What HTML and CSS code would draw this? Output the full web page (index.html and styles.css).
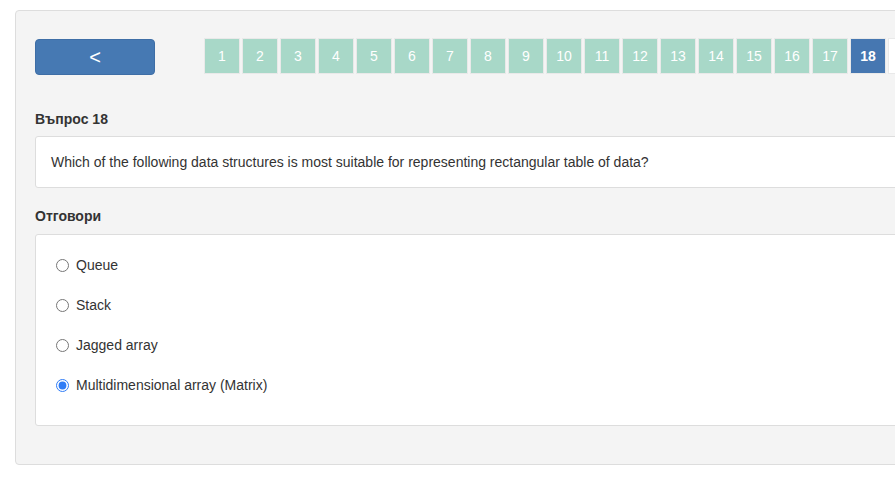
FILE: index.html
```html
<!DOCTYPE html>
<html>
<head>
<meta charset="utf-8">
<link rel="stylesheet" href="styles.css">
</head>
<body>
<div class="panel">
  <div class="topbar">
    <button class="back">&lt;</button>
    <div class="pages">
      <span class="pg done">1</span><span class="pg done">2</span><span class="pg done">3</span><span class="pg done">4</span><span class="pg done">5</span><span class="pg done">6</span><span class="pg done">7</span><span class="pg done">8</span><span class="pg done">9</span><span class="pg done">10</span><span class="pg done">11</span><span class="pg done">12</span><span class="pg done">13</span><span class="pg done">14</span><span class="pg done">15</span><span class="pg done">16</span><span class="pg done">17</span><span class="pg current">18</span><span class="pg"></span>
    </div>
  </div>
  <div class="label">Въпрос 18</div>
  <div class="qbox">Which of the following data structures is most suitable for representing rectangular table of data?</div>
  <div class="label second">Отговори</div>
  <div class="abox">
    <label class="opt"><input type="radio" name="a"> <span>Queue</span></label>
    <label class="opt"><input type="radio" name="a"> <span>Stack</span></label>
    <label class="opt"><input type="radio" name="a"> <span>Jagged array</span></label>
    <label class="opt"><input type="radio" name="a" checked> <span>Multidimensional array (Matrix)</span></label>
  </div>
</div>
</body>
</html>
```

FILE: styles.css
```css
html, body {
  margin: 0;
  padding: 0;
  overflow: hidden;
  background: #ffffff;
}
body {
  font-family: "Liberation Sans", Arial, sans-serif;
  font-size: 14px;
  color: #333333;
  width: 895px;
  height: 503px;
}
.panel {
  margin: 10px 0 0 15px;
  width: 1000px;
  background: #f4f4f4;
  border: 1px solid #dddddd;
  border-radius: 4px;
  padding: 28px 19px 38px 19px;
  box-sizing: content-box;
}
.topbar {
  display: flex;
  align-items: flex-start;
  height: 36px;
}
.back {
  width: 120px;
  height: 36px;
  background: #4679b3;
  border: 1px solid #3e6ea6;
  border-radius: 4px;
  color: #ffffff;
  font-family: "Liberation Sans", Arial, sans-serif;
  font-size: 20px;
  line-height: 20px;
  padding: 0;
  margin: 0;
}
.pages {
  display: flex;
  gap: 2px;
  margin-left: 49px;
  margin-top: -1px;
  white-space: nowrap;
}
.pg {
  box-sizing: border-box;
  width: 36px;
  height: 36px;
  border: 1px solid #e9e9e9;
  background: #ffffff;
  color: #ffffff;
  display: flex;
  align-items: center;
  justify-content: center;
  font-size: 14px;
  flex: none;
}
.pg.done {
  background: #a8d8c8;
}
.pg.current {
  background: #4677b1;
  font-weight: bold;
}
.label {
  font-weight: bold;
  line-height: 20px;
  margin-top: 34px;
  margin-bottom: 7px;
}
.label.second {
  margin-top: 18px;
  margin-bottom: 8px;
}
.qbox {
  background: #ffffff;
  border: 1px solid #dddddd;
  border-radius: 3px;
  padding: 16px 15px 15px 15px;
  line-height: 19px;
}
.abox {
  background: #ffffff;
  border: 1px solid #dddddd;
  border-radius: 3px;
  padding: 10px 20px 20px 20px;
  display: flex;
  flex-direction: column;
}
.opt {
  display: flex;
  align-items: center;
  height: 40px;
  line-height: 20px;
}
.opt input {
  margin: 0 7px 0 0;
  width: 13px;
  height: 13px;
  accent-color: #2f7cf6;
}
```
